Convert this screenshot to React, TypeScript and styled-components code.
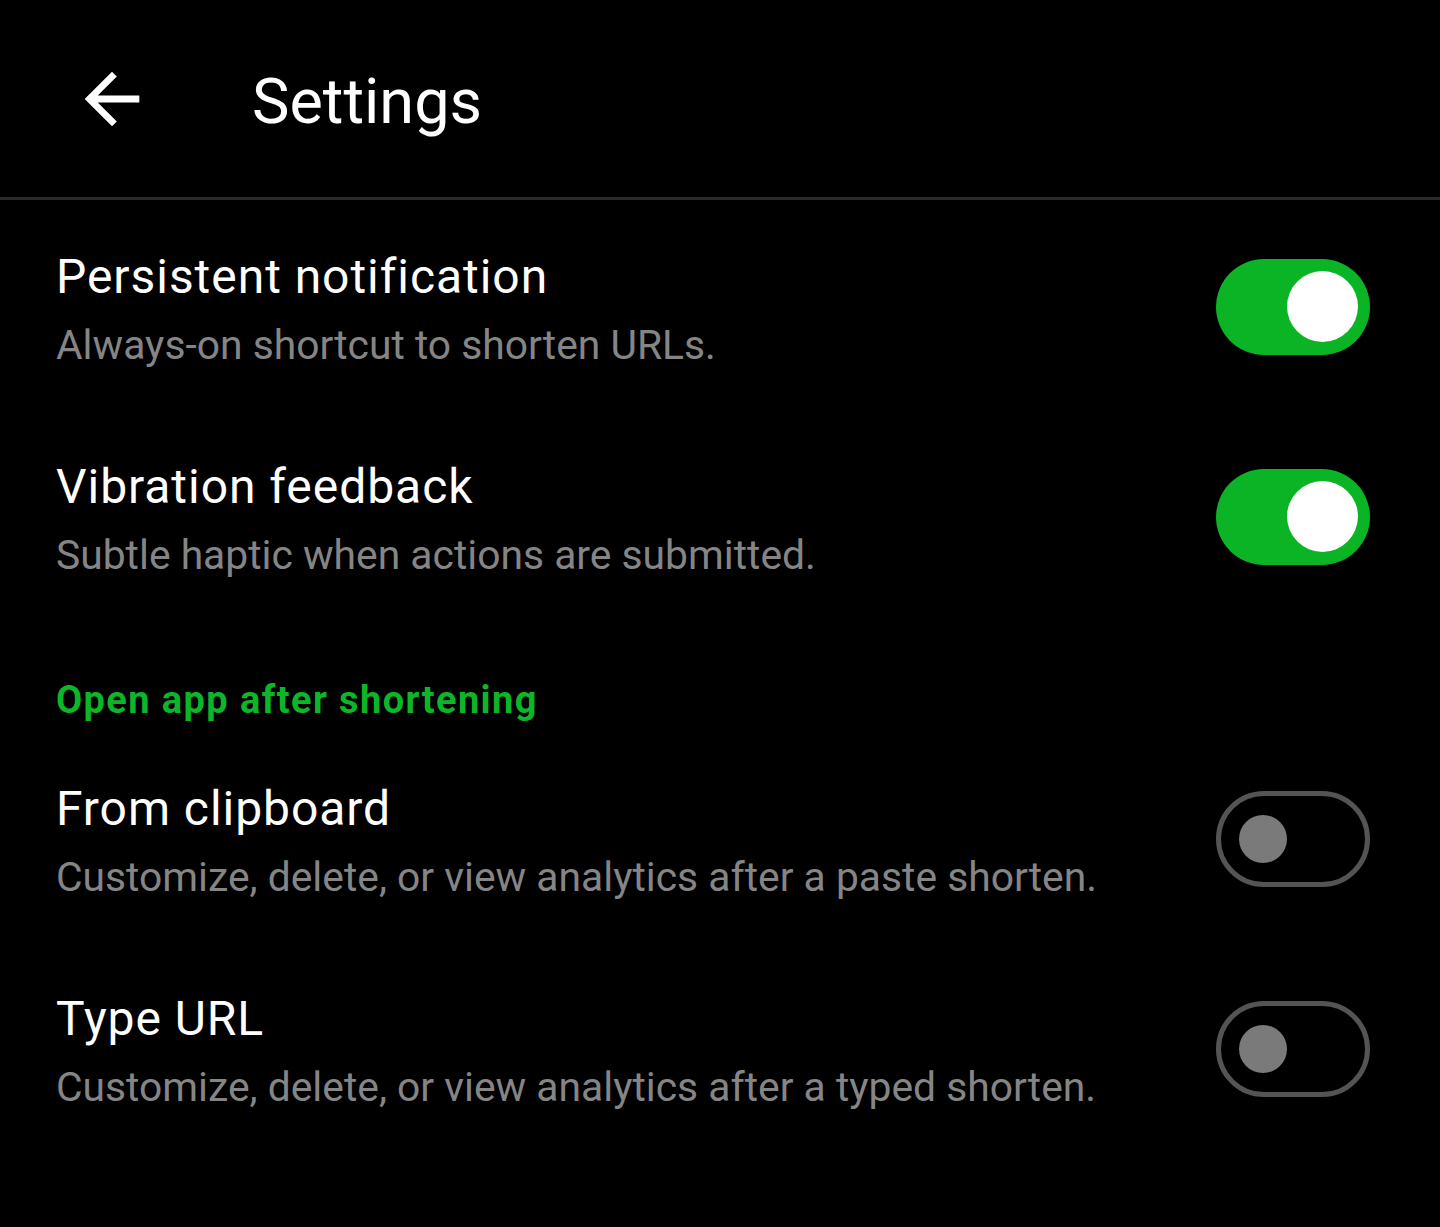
import * as React from 'react';
import styled, { createGlobalStyle } from 'styled-components';

const GlobalStyle = createGlobalStyle`
  html, body {
    margin: 0;
    padding: 0;
    background: #000000;
  }
  body {
    font-family: Roboto, 'Noto Sans', sans-serif;
    color: #ffffff;
  }
`;

const Screen = styled.div`
  width: 1440px;
  min-height: 1227px;
  background: #000000;
`;

const TopBar = styled.header`
  display: flex;
  align-items: center;
  height: 197px;
  padding-left: 71px;
  border-bottom: 3px solid #2a2a2a;
`;

const BackButton = styled.button`
  display: flex;
  align-items: center;
  justify-content: center;
  width: 82px;
  height: 82px;
  padding: 0;
  border: none;
  background: transparent;
  color: #ffffff;
  cursor: pointer;
`;

const PageTitle = styled.h1`
  margin: 6px 0 0 99px;
  font-size: 63px;
  line-height: 63px;
  font-weight: 400;
  color: #ffffff;
`;

const List = styled.div`
  padding-top: 5px;
`;

const Row = styled.div`
  display: flex;
  align-items: flex-start;
  justify-content: space-between;
  padding: 44px 70px 44px 56px;
`;

const RowText = styled.div`
  display: flex;
  flex-direction: column;
`;

const RowTitle = styled.div`
  font-size: 48px;
  line-height: 56px;
  letter-spacing: 0.95px;
  color: #ffffff;
`;

const RowSubtitle = styled.div`
  margin-top: 14px;
  font-size: 40.8px;
  line-height: 52px;
  color: #858585;
`;

const SectionHeader = styled.div`
  padding: 53px 56px 15px;
  font-size: 38px;
  line-height: 44px;
  font-weight: 700;
  letter-spacing: 1.4px;
  color: #0db528;
`;

const Track = styled.div<{ $on: boolean }>`
  position: relative;
  flex-shrink: 0;
  box-sizing: border-box;
  width: 154px;
  height: 96px;
  margin-top: 10px;
  border-radius: 48px;
  background: ${p => (p.$on ? '#0bb425' : 'transparent')};
  border: ${p => (p.$on ? 'none' : '5px solid #545454')};
`;

const Knob = styled.span<{ $on: boolean }>`
  position: absolute;
  border-radius: 50%;
  ${p =>
    p.$on
      ? `
    width: 71px;
    height: 71px;
    top: 12px;
    right: 12px;
    background: #ffffff;
  `
      : `
    width: 48px;
    height: 48px;
    top: 19px;
    left: 18px;
    background: #7a7a7a;
  `}
`;

const BackIcon = () => (
  <svg width="82" height="82" viewBox="0 0 24 24" fill="currentColor">
    <path d="M20 11H7.83l5.59-5.59L12 4l-8 8 8 8 1.41-1.41L7.83 13H20v-2z" />
  </svg>
);

const Toggle = ({ on }: { on: boolean }) => (
  <Track $on={on}>
    <Knob $on={on} />
  </Track>
);

interface ISetting {
  title: string;
  subtitle: string;
  on: boolean;
}

const general: ISetting[] = [
  { title: 'Persistent notification', subtitle: 'Always-on shortcut to shorten URLs.', on: true },
  { title: 'Vibration feedback', subtitle: 'Subtle haptic when actions are submitted.', on: true },
];

const openApp: ISetting[] = [
  { title: 'From clipboard', subtitle: 'Customize, delete, or view analytics after a paste shorten.', on: false },
  { title: 'Type URL', subtitle: 'Customize, delete, or view analytics after a typed shorten.', on: false },
];

const SettingRow = ({ title, subtitle, on }: ISetting) => (
  <Row>
    <RowText>
      <RowTitle>{title}</RowTitle>
      <RowSubtitle>{subtitle}</RowSubtitle>
    </RowText>
    <Toggle on={on} />
  </Row>
);

const App = () => {
  return (
    <Screen>
      <GlobalStyle />
      <TopBar>
        <BackButton aria-label="Back"><BackIcon /></BackButton>
        <PageTitle>Settings</PageTitle>
      </TopBar>
      <List>
        {general.map(s => <SettingRow key={s.title} {...s} />)}
        <SectionHeader>Open app after shortening</SectionHeader>
        {openApp.map(s => <SettingRow key={s.title} {...s} />)}
      </List>
    </Screen>
  );
};

export default App;
